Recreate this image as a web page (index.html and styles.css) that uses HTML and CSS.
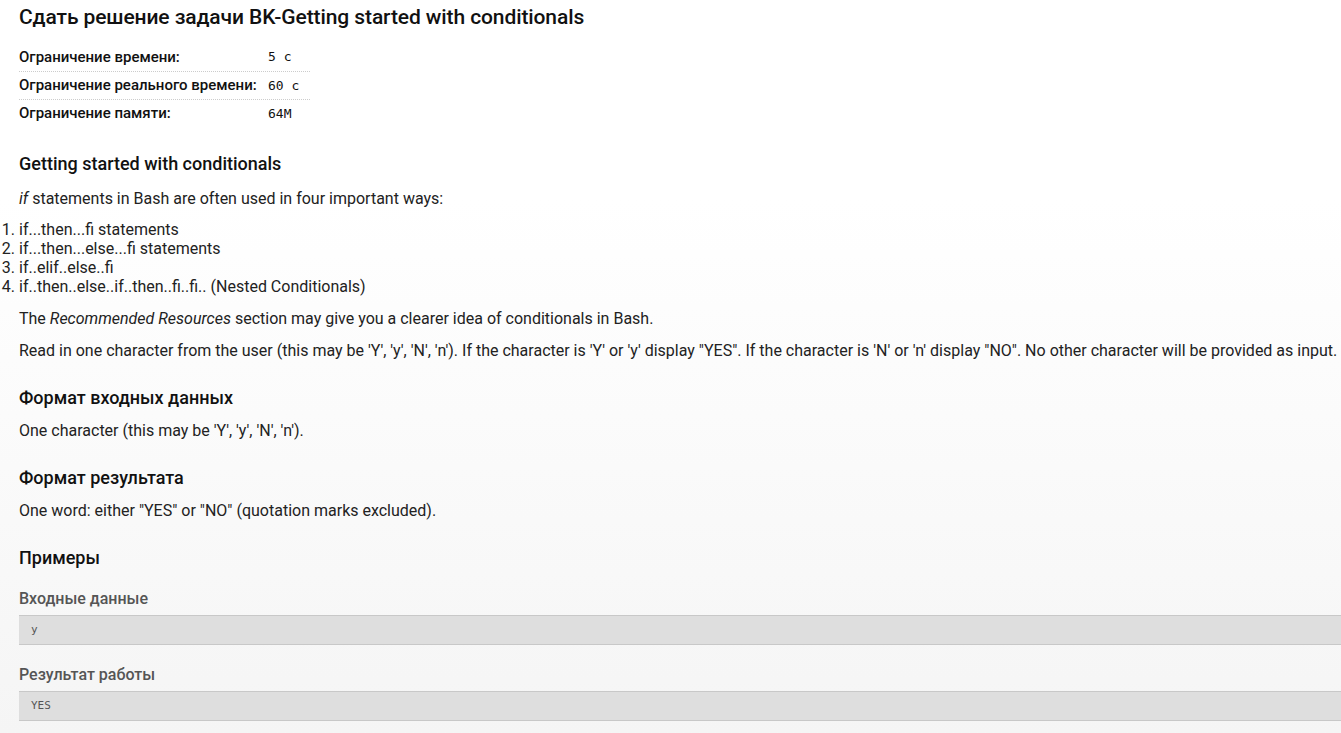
FILE: index.html
```html
<!DOCTYPE html>
<html lang="ru">
<head>
<meta charset="utf-8">
<title>Сдать решение задачи</title>
<link rel="stylesheet" href="styles.css">
</head>
<body>
<div class="page">
  <h1 class="title">Сдать решение задачи BK-Getting started with conditionals</h1>
  <div class="limits">
    <div class="lim-row"><span class="lim-key">Ограничение времени:</span><span class="lim-val">5 с</span></div>
    <div class="lim-row"><span class="lim-key">Ограничение реального времени:</span><span class="lim-val">60 с</span></div>
    <div class="lim-row"><span class="lim-key">Ограничение памяти:</span><span class="lim-val">64M</span></div>
  </div>

  <h2 class="sec first">Getting started with conditionals</h2>
  <p class="intro"><em>if</em> statements in Bash are often used in four important ways:</p>
  <ol class="ways">
    <li>if...then...fi statements</li>
    <li>if...then...else...fi statements</li>
    <li>if..elif..else..fi</li>
    <li>if..then..else..if..then..fi..fi.. (Nested Conditionals)</li>
  </ol>
  <p class="txt">The <em>Recommended Resources</em> section may give you a clearer idea of conditionals in Bash.</p>
  <p class="txt">Read in one character from the user (this may be 'Y', 'y', 'N', 'n'). If the character is 'Y' or 'y' display "YES". If the character is 'N' or 'n' display "NO". No other character will be provided as input.</p>

  <h2 class="sec">Формат входных данных</h2>
  <p class="txt">One character (this may be 'Y', 'y', 'N', 'n').</p>

  <h2 class="sec">Формат результата</h2>
  <p class="txt">One word: either "YES" or "NO" (quotation marks excluded).</p>

  <h2 class="sec">Примеры</h2>
  <h3 class="ex-label">Входные данные</h3>
  <pre class="ex-box">y</pre>
  <h3 class="ex-label">Результат работы</h3>
  <pre class="ex-box">YES</pre>
</div>
</body>
</html>
```
FILE: styles.css
```css
html, body {
  margin: 0;
  padding: 0;
}
body {
  font-family: Roboto, "Liberation Sans", sans-serif;
  color: #222;
  background: linear-gradient(to bottom, #ffffff 0px, #ffffff 200px, #f5f5f5 733px);
  min-height: 733px;
  overflow: hidden;
}
.page {
  padding: 5px 0 0 19px;
}
.title {
  margin: 0;
  font-size: 21px;
  font-weight: 500;
  line-height: 24px;
  letter-spacing: -0.1px;
  color: #111;
}
.limits {
  margin-top: 14px;
  width: 291px;
}
.lim-row {
  display: flex;
  height: 28px;
  line-height: 28px;
  box-sizing: border-box;
}
.lim-row + .lim-row {
  border-top: 1px dotted #ccc;
  line-height: 27px;
}
.lim-key {
  width: 249px;
  flex: none;
  font-size: 15px;
  font-weight: 500;
  color: #111;
  white-space: nowrap;
}
.lim-val {
  font-family: "DejaVu Sans Mono", monospace;
  font-size: 13px;
  color: #111;
}
.sec {
  margin: 25.5px 0 0;
  font-size: 18px;
  font-weight: 500;
  line-height: 22px;
  color: #111;
}
.sec.first {
  margin-top: 26px;
}
.intro {
  margin: 14px 0 0;
  font-size: 16px;
  line-height: 20px;
}
.ways {
  margin: 11px 0 0;
  padding: 0;
  list-style-position: outside;
  font-size: 16px;
  line-height: 19px;
}
.txt {
  margin: 12px 0 0;
  font-size: 16px;
  line-height: 20px;
  white-space: nowrap;
}
.ways + .txt {
  margin-top: 13px;
}
.sec + .txt {
  margin-top: 12.5px;
}
.ex-label {
  margin: 20px 0 0;
  font-size: 16px;
  font-weight: 500;
  line-height: 20px;
  color: #555;
}
.ex-box {
  margin: 6px 0 0;
  height: 30px;
  box-sizing: border-box;
  padding: 0 0 0 12px;
  background: #dedede;
  border-top: 1px solid #c8c8c8;
  border-bottom: 1px solid #c8c8c8;
  font-family: "DejaVu Sans Mono", monospace;
  font-size: 11px;
  line-height: 28px;
  color: #555;
}
```
